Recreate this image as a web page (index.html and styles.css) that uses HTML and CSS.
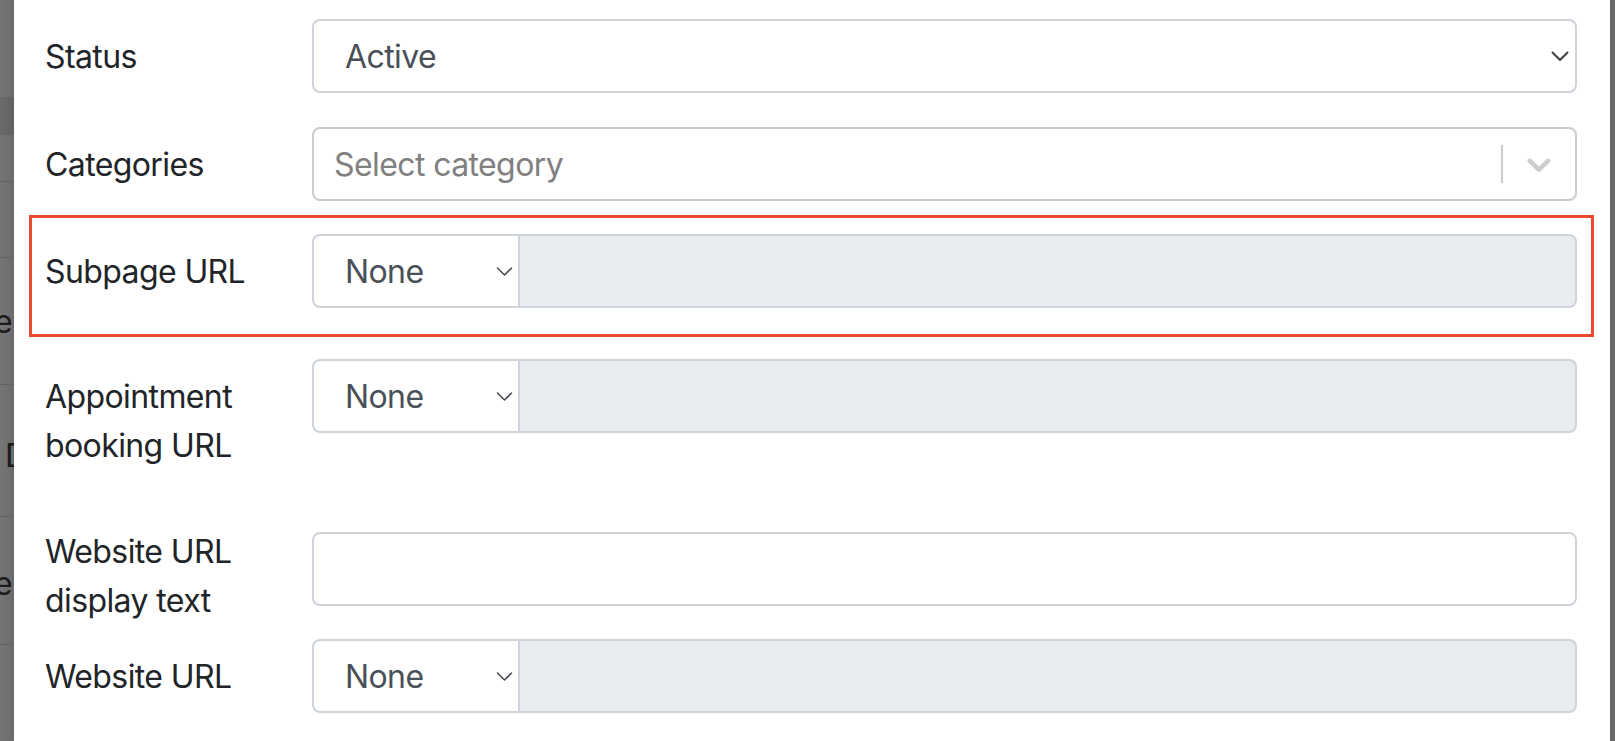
FILE: index.html
```html
<!DOCTYPE html>
<html lang="en">
<head>
<meta charset="utf-8">
<title>Edit listing</title>
<link rel="stylesheet" href="styles.css">
</head>
<body>
<div class="page">
  <div class="backdrop-left">
    <div class="bg-row r1"></div>
    <div class="bg-row r2"></div>
    <div class="bg-row r3"></div>
    <div class="bg-row r4"></div>
    <div class="bg-row r5"><span class="frag frag-e">e</span></div>
    <div class="bg-row r6"><span class="frag frag-d">D</span></div>
    <div class="bg-row r7"><span class="frag frag-e">e</span></div>
    <div class="bg-row r8"></div>
  </div>

  <div class="modal">
    <form class="form">
      <div class="row row-status">
        <label class="label">Status</label>
        <div class="control">
          <div class="select select-full">
            <span class="value">Active</span>
            <svg class="chev chev-bold" width="18" height="11" viewBox="0 0 18 11"><polyline points="1.5,1.5 9,9 16.5,1.5" fill="none" stroke="#3a3f45" stroke-width="2" stroke-linecap="round" stroke-linejoin="round"/></svg>
          </div>
        </div>
      </div>

      <div class="row row-categories">
        <label class="label">Categories</label>
        <div class="control">
          <div class="rs-control">
            <span class="rs-placeholder">Select category</span>
            <span class="rs-sep"></span>
            <span class="rs-indicator">
              <svg width="40" height="40" viewBox="0 0 20 20"><path fill="#cccccc" d="M4.516 7.548c0.436-0.446 1.043-0.481 1.576 0l3.908 3.747 3.908-3.747c0.533-0.481 1.141-0.446 1.574 0 0.436 0.445 0.408 1.197 0 1.615-0.406 0.418-4.695 4.502-4.695 4.502-0.217 0.223-0.502 0.335-0.787 0.335s-0.57-0.112-0.789-0.335c0 0-4.287-4.084-4.695-4.502s-0.436-1.170 0-1.615z"/></svg>
            </span>
          </div>
        </div>
      </div>

      <div class="row row-subpage">
        <label class="label">Subpage URL</label>
        <div class="control">
          <div class="group">
            <div class="select select-addon">
              <span class="value">None</span>
              <svg class="chev" width="17" height="11" viewBox="0 0 17 11"><polyline points="1.5,2 8.5,9 15.5,2" fill="none" stroke="#4a4f55" stroke-width="1.6" stroke-linecap="round" stroke-linejoin="round"/></svg>
            </div>
            <div class="disabled-input"></div>
          </div>
        </div>
      </div>

      <div class="row row-appt">
        <label class="label">Appointment booking URL</label>
        <div class="control">
          <div class="group">
            <div class="select select-addon">
              <span class="value">None</span>
              <svg class="chev" width="17" height="11" viewBox="0 0 17 11"><polyline points="1.5,2 8.5,9 15.5,2" fill="none" stroke="#4a4f55" stroke-width="1.6" stroke-linecap="round" stroke-linejoin="round"/></svg>
            </div>
            <div class="disabled-input"></div>
          </div>
        </div>
      </div>

      <div class="row row-display">
        <label class="label label-tight">Website URL display text</label>
        <div class="control">
          <div class="text-input"></div>
        </div>
      </div>

      <div class="row row-website">
        <label class="label">Website URL</label>
        <div class="control">
          <div class="group">
            <div class="select select-addon">
              <span class="value">None</span>
              <svg class="chev" width="17" height="11" viewBox="0 0 17 11"><polyline points="1.5,2 8.5,9 15.5,2" fill="none" stroke="#4a4f55" stroke-width="1.6" stroke-linecap="round" stroke-linejoin="round"/></svg>
            </div>
            <div class="disabled-input"></div>
          </div>
        </div>
      </div>
    </form>
  </div>

  <div class="backdrop-right"></div>
</div>
</body>
</html>
```

FILE: styles.css
```css
* { box-sizing: border-box; }

html, body {
  margin: 0;
  padding: 0;
  height: 100%;
  overflow: hidden;
}

body {
  font-family: "Inter", "Liberation Sans", Arial, sans-serif;
  font-size: 32px;
  line-height: 49px;
  letter-spacing: -0.6px;
  color: #212529;
  background: #6b6b6b;
}

.page {
  display: flex;
  height: 741px;
  width: 1615px;
}

/* ---------- backdrop (page behind the modal) ---------- */
.backdrop-left {
  flex: 0 0 14px;
  width: 14px;
  overflow: hidden;
  display: flex;
  flex-direction: column;
  background: linear-gradient(to right, #767676, #6a6a6a);
}

.bg-row {
  flex: none;
  display: flex;
  align-items: center;
  overflow: hidden;
}

.r1 { height: 97px; }
.r2 { height: 38px; background: rgba(0, 0, 0, 0.09); }
.r3 { height: 47px; border-bottom: 1px solid #626262; }
.r4 { height: 76px; border-bottom: 1px solid #626262; }
.r5 { height: 127px; border-bottom: 1px solid #626262; }
.r6 { height: 132px; border-bottom: 1px solid #626262; padding-top: 10px; }
.r7 { height: 128px; border-bottom: 1px solid #626262; padding-top: 6px; }
.r8 { flex: 1; }

.frag {
  display: block;
  flex: none;
  color: #1c1c1c;
  font-size: 32px;
  line-height: 49px;
}

.frag-e { margin-left: -6px; }
.frag-d { margin-left: 5px; }

.backdrop-right {
  flex: 0 0 5px;
  background: #686868;
}

/* ---------- modal ---------- */
.modal {
  flex: 0 0 1596px;
  background: #ffffff;
  padding: 19px 33px 0 31px;
}

.form {
  display: flex;
  flex-direction: column;
}

.row {
  display: flex;
  align-items: flex-start;
}

.label {
  flex: 0 0 267px;
  padding-top: 13px;
  padding-right: 12px;
  color: #212529;
}

.label-tight {
  padding-top: 0;
  margin-top: -5px;
}

.control {
  flex: 1;
  min-width: 0;
}

.row-status { margin-bottom: 34px; }
.row-categories { margin-bottom: 33px; }
.row-subpage { margin-bottom: 51px; position: relative; }
.row-appt { margin-bottom: 50px; }
.row-appt .label { padding-bottom: 12px; }
.row-display { margin-bottom: 14px; }

/* annotation frame drawn over the highlighted row */
.row-subpage::after {
  content: "";
  position: absolute;
  top: -19px;
  bottom: -29px;
  left: -16px;
  right: -17px;
  border: 3px solid #ea4a2e;
  pointer-events: none;
}

/* ---------- controls ---------- */
.select {
  height: 74px;
  display: flex;
  align-items: center;
  background: #ffffff;
  border: 2px solid #ced4da;
  border-radius: 8px;
  padding: 0 6px 0 31px;
  color: #495057;
}

.select .value { flex: 1; }

.chev { flex: none; }

.group {
  display: flex;
  height: 74px;
}

.select-addon {
  flex: 0 0 208px;
  border-radius: 8px 0 0 8px;
  padding-right: 5px;
}

.disabled-input {
  flex: 1;
  height: 74px;
  background: #e9ecef;
  border: 2px solid #ced4da;
  border-left: none;
  border-radius: 0 8px 8px 0;
}

.rs-control {
  height: 74px;
  display: flex;
  align-items: center;
  border: 2px solid #cccccc;
  border-radius: 8px;
  background: #ffffff;
}

.rs-placeholder {
  flex: 1;
  padding-left: 20px;
  color: #808080;
}

.rs-sep {
  flex: none;
  align-self: stretch;
  width: 2px;
  margin: 16px 0;
  background: #cccccc;
}

.rs-indicator {
  flex: none;
  display: flex;
  padding: 0 16px;
}

.text-input {
  height: 74px;
  background: #ffffff;
  border: 2px solid #ced4da;
  border-radius: 8px;
}
```
